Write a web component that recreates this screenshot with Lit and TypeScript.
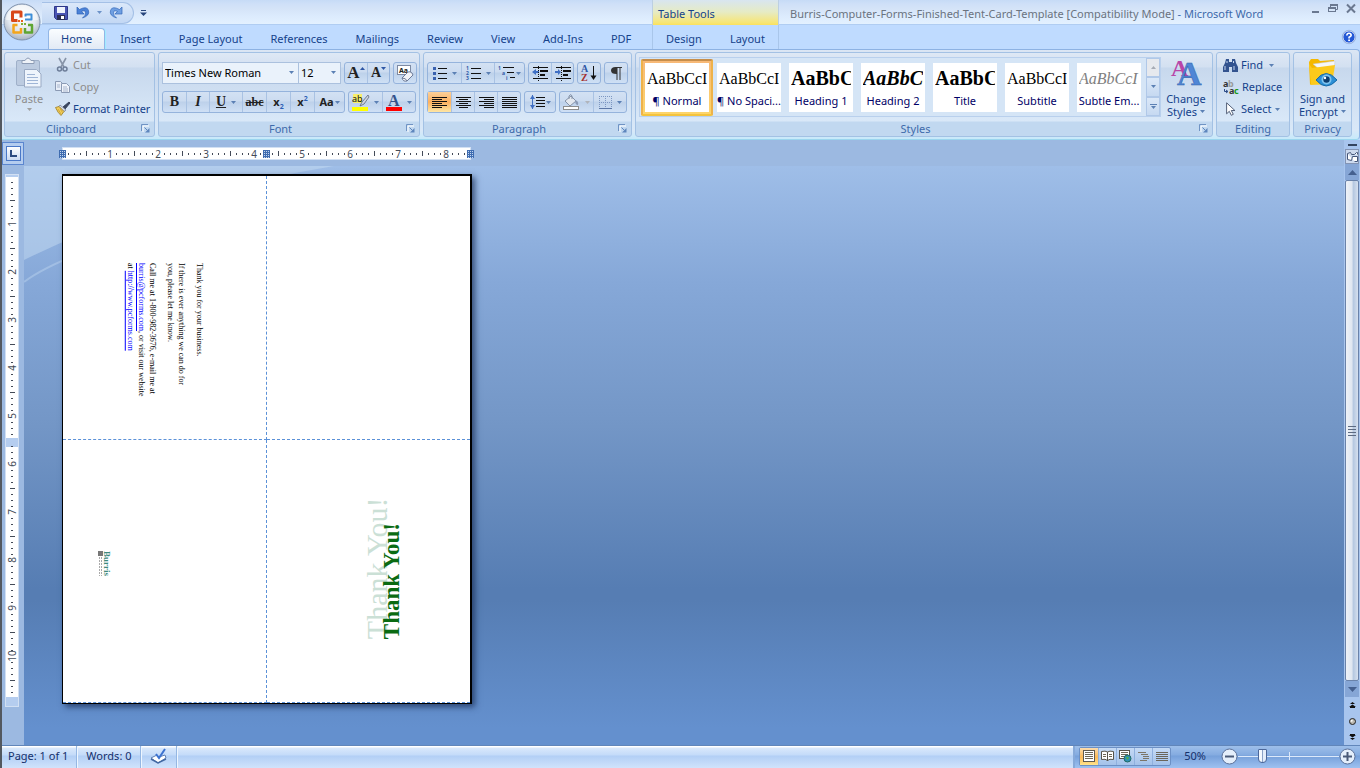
import { LitElement, html, svg, css } from "lit";
import { customElement, state } from "lit/decorators.js";
import { classMap } from "lit/directives/class-map.js";

const icon = (w: number, h: number, body: unknown) =>
  html`<svg width=${w} height=${h} viewBox="0 0 ${w} ${h}" aria-hidden="true">${body}</svg>`;

const line = (x1: number, y: number, x2: number, c = "#111", h = 1) =>
  svg`<rect x=${x1} y=${y} width=${x2 - x1} height=${h} fill=${c} />`;

const caret = (c = "#5b80b4") => icon(5, 3, svg`<path d="M0 0h5L2.5 3z" fill=${c} />`);
const caretUp = (c = "#5b80b4") => icon(5, 3, svg`<path d="M0 3h5L2.5 0z" fill=${c} />`);

const launcher = (name: string) => html`<button class="launch" aria-label="${name} options">${icon(
  9, 9,
  svg`<path d="M.5 7V.5H7" fill="none" stroke="#6f93c4"/><path d="M2 8V2h6" fill="none" stroke="#fff"/><path d="M3.500 3.500l3 3" stroke="#5e86bd"/><path d="M8.500 4v4.500H4z" fill="#5e86bd"/>`
)}</button>`;

const I = {
  office: icon(38, 38, svg`
    <defs><radialGradient id="orb" cx=".5" cy=".35" r=".65"><stop offset="0" stop-color="#fff"/><stop offset=".6" stop-color="#e3e8ef"/><stop offset="1" stop-color="#a9b3c1"/></radialGradient></defs>
    <circle cx="19" cy="19" r="18" fill="url(#orb)" stroke="#7d90ac"/>
    <path d="M3 17a16 15 0 0 1 32 0z" fill="#fff" opacity=".5"/>
    <g fill="none" stroke-linejoin="round">
      <path d="M18 14.500v-5.500h-8.500v8.500h5" stroke="#d8471a" stroke-width="3"/>
      <path d="M22 16.500h6.500v-5h-6v2" stroke="#3f8fd8" stroke-width="2"/>
      <path d="M14.500 22h-4v7.500h7.500v-4.500" stroke="#f3a51c" stroke-width="2.500"/>
      <path d="M22 25v4.500h7v-7.500h-4" stroke="#5fa532" stroke-width="2.500"/>
    </g>
    <g fill="#e8641c"><rect x="15" y="17" width="2" height="2"/><rect x="18" y="17" width="2" height="2"/></g>
    <g fill="#7fb13a"><rect x="18" y="20" width="2" height="2"/><rect x="21" y="20" width="2" height="2"/></g>`),
  save: icon(14, 14, svg`<path d="M.5.5h13v13h-11l-2-2z" fill="#4a55b4" stroke="#2d3788"/><rect x="3" y="1" width="8" height="6" fill="#eef3fc"/><rect x="3" y="9" width="8" height="5" fill="#2b2f55"/><rect x="7" y="10" width="3" height="3" fill="#fff"/>`),
  undo: icon(13, 13, svg`<path d="M1 1v7h7L5.500 5.500q3.500-2 4 1T6.500 12Q14 9.500 12.500 4.500T3.500 3.500z" fill="#4b82d8" stroke="#2f62b5" stroke-width=".7"/>`),
  redo: icon(13, 13, svg`<path d="M12 1v7H5l2.500-2.500q-3.500-2-4 1T6.500 12Q-1 9.500 .5 4.500T9.500 3.500z" fill="#6f9fe2" stroke="#3467b8" stroke-width=".7"/>`),
  custom: icon(7, 6, svg`<path d="M1 0h5v1H1zM0 2.500h7L3.500 6z" fill="#27457c"/>`),
  min: icon(9, 12, svg`<rect x="1" y="7" width="7" height="2" fill="#6a7890"/>`),
  restore: icon(10, 10, svg`<path d="M2.500 3V1.500h7v4H8" fill="none" stroke="#6a7890"/><path d="M2 1h8M0 4h8" stroke="#6a7890" stroke-width="2"/><rect x=".5" y="3.500" width="7" height="4" fill="none" stroke="#6a7890"/>`),
  close: icon(10, 9, svg`<path d="M1 .5l8 8M9 .5l-8 8" stroke="#6a7890" stroke-width="2"/>`),
  help: icon(14, 14, svg`<circle cx="7" cy="7" r="6.200" fill="#2459d6" stroke="#fff" stroke-width="1"/><circle cx="7" cy="7" r="6.700" fill="none" stroke="#6e8fc6" stroke-width=".6"/><path d="M4.800 5.500Q5 3.300 7 3.300T9.200 5.300Q9.200 6.300 7.100 7.300V8.500" stroke="#fff" stroke-width="1.600" fill="none"/><rect x="6.200" y="9.500" width="1.800" height="1.600" fill="#fff"/>`),
  paste: icon(28, 32, svg`<rect x="1.500" y="3.500" width="23" height="25" rx="1.500" fill="#bccbe0" stroke="#9fb0c9"/><path d="M7 3.500h3q3-5 6 0h3v3H7z" fill="#eef2f8" stroke="#8d9cb5"/><path d="M9.500 12.500h12l4.500 4.500v13h-16.500z" fill="#eef4fc" stroke="#9aaac4"/><path d="M12 17.500h8M12 20.500h11M12 23.500h11M12 26.500h11" stroke="#9fb5d6"/>`),
  cut: icon(13, 14, svg`<path d="M3 0l5 9M10 0L5 9" stroke="#8794a8" stroke-width="1.600"/><circle cx="3.500" cy="11" r="2" fill="none" stroke="#6d7d98" stroke-width="1.500"/><circle cx="9" cy="11" r="2" fill="none" stroke="#6d7d98" stroke-width="1.500"/>`),
  copy: icon(15, 12, svg`<path d="M.5.5h5l3 3v6h-8z" fill="#e8eef8" stroke="#8b9ab4"/><path d="M6.500 2.500h5l3 3v6h-8z" fill="#f0f4fb" stroke="#8b9ab4"/><path d="M2 4h3M2 6h3M8 6h4M8 8h5M8 10h5" stroke="#a7b5cd"/>`),
  painter: icon(15, 14, svg`<path d="M14 0l1 1-5 6-2-2z" fill="#39455e" stroke="#39455e"/><path d="M5 3l6 5-2 1.500L4 4.500z" fill="#d8dde8" stroke="#6d7890" stroke-width=".7"/><path d="M.5 5.500L4 4.500 9 9.500l-3 4Q3 11 .5 5.500z" fill="#f4cf5b" stroke="#9a7b20" stroke-width=".8"/><path d="M3 7l3 5M5 6.500l2.500 4" stroke="#b8902a" stroke-width=".6"/>`),
  eraser: icon(17, 17, svg`<rect x=".5" y=".5" width="13" height="9" fill="#fff" stroke="#7d8aa3"/><text x="2" y="8" class="glyph8">Aa</text><path d="M5 13l6-6q2-1 4 1l1 2-6 6q-4 1-5-3z" fill="#f1f3f8" stroke="#6d7b98"/><path d="M5 13q4 0 5 3" fill="none" stroke="#6d7b98"/>`),
  bullets: icon(14, 14, svg`${[1, 6, 11].map((y) => svg`<rect x="0" y=${y} width="3" height="3" fill="#3a62b0"/>${line(5, y + 1, 14)}`)}`),
  numbers: icon(15, 14, svg`${[1, 6, 11].map((y, i) => svg`<text x="0" y=${y + 3} class="num">${i + 1}</text>${line(5, y + 1, 15)}`)}`),
  multi: icon(17, 15, svg`<text x="0" y="4" class="num">1</text>${line(5, 1, 16)}<text x="4" y="9" class="num">a</text>${line(9, 6, 16)}<text x="8" y="14" class="num">i</text>${line(12, 11, 17)}`),
  outdent: icon(16, 15, svg`${line(1, 1, 16)}${line(8, 4, 16, "#111", 2)}${line(8, 8, 13, "#111", 2)}${line(1, 12, 16)}<path d="M0 6l4-3v2h3v2H4v2z" fill="#3f6fc4"/><path d="M6.500 0v15" stroke="#111" stroke-dasharray="1 1"/>`),
  indent: icon(16, 15, svg`${line(1, 1, 16)}${line(8, 4, 16, "#111", 2)}${line(8, 8, 13, "#111", 2)}${line(1, 12, 16)}<path d="M6 6L3 3v2H0v2h3v2z" fill="#3f6fc4"/><path d="M6.500 0v15" stroke="#111" stroke-dasharray="1 1"/>`),
  sort: icon(16, 16, svg`<text x="0" y="7" class="sortA">A</text><text x="0" y="16" class="sortZ">Z</text><path d="M12.500 1v12" stroke="#111"/><path d="M9.500 10.500h6L12.500 15z" fill="#111"/>`),
  pilcrow: icon(11, 13, svg`<path d="M4.500 0H11v1H9.500v12h-1V1h-2v12h-1V7Q0 7 0 3.500T4.500 0z" fill="#333"/>`),
  al: icon(15, 13, svg`${[0, 2, 4, 6, 8, 10].map((y, i) => line(0, y + 1, i % 2 ? 10 : 15))}`),
  ac: icon(15, 13, svg`${[0, 2, 4, 6, 8, 10].map((y, i) => (i % 2 ? line(3, y + 1, 12) : line(0, y + 1, 15)))}`),
  ar: icon(15, 13, svg`${[0, 2, 4, 6, 8, 10].map((y, i) => line(i % 2 ? 5 : 0, y + 1, 15))}`),
  aj: icon(15, 13, svg`${[0, 2, 4, 6, 8, 10].map((y) => line(0, y + 1, 15))}`),
  spacing: icon(15, 16, svg`<path d="M2.500 1v14" stroke="#3f6fc4"/><path d="M0 5l2.500-4L5 5zM0 11l2.500 4L5 11z" fill="#3f6fc4"/>${[3, 6, 9, 12].map((y) => line(6, y, 15))}`),
  bucket: icon(17, 16, svg`<path d="M2 7l6-5 5 5-6 5z" fill="#e3e8ef" stroke="#8492a8"/><path d="M6 5V2q2-3 3 0v3" fill="none" stroke="#8492a8"/><path d="M12 6q4 1 3 5-3 0-3-5" fill="#8b9ab5"/><rect x=".5" y="12.500" width="15" height="3" fill="#fff" stroke="#8d8d8d"/>`),
  border: icon(13, 13, svg`<path d="M.5 0v12M6.500 0v12M12.500 0v12M0 .5h13M0 6.500h13" stroke="#7d97c2" stroke-dasharray="1 1"/><path d="M0 12.500h13" stroke="#5c77a6"/>`),
  highlight: icon(17, 17, svg`<rect x="1" y="0" width="9" height="9" fill="#f6ee6c"/><text x="0" y="8" class="glyph9">ab</text><path d="M16 1l-6 7-2 4 4-2 5-7z" fill="#cfd6e2" stroke="#5a6579" stroke-width=".8"/><rect x="0" y="13" width="16" height="4" fill="#ff0"/>`),
  fontColor: icon(16, 17, svg`<text x="2" y="12" class="colorA">A</text><rect x="0" y="13" width="16" height="4" fill="#f00"/>`),
  change: icon(30, 30, svg`<text x="0" y="18" class="bigA pink">A</text><text x="6" y="27" class="bigA blue">A</text>`),
  find: icon(15, 13, svg`<path d="M3 0h3v3h3V0h3l1 4 2 4v5H9V8H6v5H0V8l2-4z" fill="#33538f"/><path d="M2 7v4M11 7v4M4 2v2M10.500 2v2" stroke="#c8d8f0"/>`),
  replace: icon(16, 15, svg`<text x="0" y="7" class="rep">a</text><text x="5" y="7" class="rep faint">b</text><path d="M1.500 9v2.500h3M3 10l2 1.500L3 13" fill="none" stroke="#2b4a86"/><text x="6" y="14" class="rep">a</text><text x="11" y="14" class="rep green">c</text>`),
  select: icon(10, 14, svg`<path d="M.6.8v11l2.700-2.500 2 4 2-1-2-3.800h3.600z" fill="#fff" stroke="#44506a" stroke-width=".9"/>`),
  privacy: icon(30, 30, svg`<path d="M1 4l2-3h7l2 2 14-1v5L2 27z" fill="#f5b800"/><path d="M5 6l22-3-2 20z" fill="#f5f6f8" stroke="#c5c9cf" stroke-width=".5"/><path d="M1 6l3 4 23-3-3 19L3 27z" fill="#fcca1c"/><path d="M8 22q10-13 21 0-11 12-21 0z" fill="#2c8fd6" stroke="#176aa8"/><circle cx="18.500" cy="21.500" r="5" fill="#7fc4ef"/><circle cx="18.500" cy="21.500" r="3.200" fill="#0c3d70"/><circle cx="17" cy="20" r="1.200" fill="#fff"/>`),
  proof: icon(17, 16, svg`<path d="M1 10l6-3 2 2 6-2 1 3-8 5z" fill="#fff" stroke="#5d7fb5"/><path d="M1 11l7 4 8-4" fill="none" stroke="#4368a3" stroke-width="1.500"/><path d="M6 6l3 4 6-9" fill="none" stroke="#3c72d0" stroke-width="2"/>`),
  vPrint: icon(12, 12, svg`<rect x=".5" y=".5" width="11" height="11" fill="#fff" stroke="#5f5a50"/>${[2, 4, 6, 8].map((y) => line(2, y, 10, "#6e6758"))}`),
  vRead: icon(13, 12, svg`<path d="M.5 1.500q4-1 6 .5 2-1.500 6-.5v8q-4-1-6 1-2-2-6-1zM6.500 2v9" fill="#fff" stroke="#57534a"/><path d="M2 4.500h3M2 6.500h3M8 4.500h3M8 6.500h3" stroke="#6e6758"/>`),
  vWeb: icon(13, 13, svg`<rect x=".5" y=".5" width="10" height="8" fill="#fff" stroke="#57534a"/><path d="M2 2.500h7M2 4.500h7M2 6.500h4" stroke="#6e6758"/><circle cx="8.500" cy="8.500" r="3.500" fill="#2f8fb5" stroke="#1f6a63"/><path d="M7 7q2-1 3 1l-2 2z" fill="#52b04a"/>`),
  vOutline: icon(12, 11, svg`${line(0, 1, 8, "#7b7568")}${line(3, 3, 10, "#7b7568")}${line(5, 5, 11, "#7b7568")}${line(5, 7, 11, "#7b7568")}${line(2, 9, 9, "#7b7568")}`),
  vDraft: icon(12, 11, svg`${[1, 3, 5, 7, 9].map((y) => line(0, y, 12, "#6b665a"))}`),
  minus: icon(17, 17, svg`<circle cx="8.500" cy="8.500" r="7.500" fill="#e4eefb" stroke="#5c7199"/><rect x="4" y="7.500" width="9" height="2" fill="#4a5a78"/>`),
  plus: icon(17, 17, svg`<circle cx="8.500" cy="8.500" r="7.500" fill="#e4eefb" stroke="#5c7199"/><path d="M4 8.500h9M8.500 4v9" stroke="#4a5a78" stroke-width="2"/>`),
  rulerToggle: icon(13, 13, svg`<path d="M1.500 3.500v6l4 1 1-4h5v5h-3M1.500 3.500l3-1 1 2h3l2-2h1v2" fill="#fff" stroke="#45567a"/>`),
  prev: icon(7, 6, svg`<path d="M3.500 0L6 2H1zM3.500 2.500L7 5H0zM1 5h5v1H1z" fill="#111"/>`),
  next: icon(7, 6, svg`<path d="M1 0h5v1H1zM0 1h7L3.500 3.500zM1 4h5L3.500 6z" fill="#111"/>`),
  ball: icon(7, 7, svg`<circle cx="3.500" cy="3.500" r="3" fill="#bcb9b0" stroke="#222"/><circle cx="2.700" cy="2.700" r="1" fill="#fff"/>`),
};

const dotGrid = (x: number) => svg`<g stroke="#3f6cb0" stroke-width="1"><rect x=${x} y="5" width="7" height="8" fill="#c3d6ef" stroke="none"/>${[0, 2, 4, 6].map(
  (i) => svg`<path d="M${x + i + 0.5} 5v8M${x} ${i + 5.5}h7" />`
)}</g>`;

const STYLES = [
  ["AaBbCcI", "¶ Normal", "s-body"],
  ["AaBbCcI", "¶ No Spaci...", "s-body"],
  ["AaBbC", "Heading 1", "s-head"],
  ["AaBbCc", "Heading 2", "s-head s-ital"],
  ["AaBbC", "Title", "s-head"],
  ["AaBbCcI", "Subtitle", "s-body"],
  ["AaBbCcI", "Subtle Em...", "s-body s-ital s-grey"],
];

const TABS = ["Home", "Insert", "Page Layout", "References", "Mailings", "Review", "View", "Add-Ins", "PDF"];

@customElement("app-root")
class AppRoot extends LitElement {
  @state() private tab = "Home";
  @state() private style = 0;

  static styles = css`
    :host {
      display: flex;
      flex-direction: column;
      height: 100vh;
      min-width: 1100px;
      box-sizing: border-box;
      border-left: 2px solid #53585f;
      background: #bfdbff;
      color: #15428b;
      font: 11px/14px "Noto Sans", "Open Sans", sans-serif;
      overflow: hidden;
    }
    * { box-sizing: border-box; }
    svg { display: block; flex: none; overflow: visible; }
    button, select, input { font: inherit; color: inherit; margin: 0; }
    button {
      display: flex; align-items: center; justify-content: center;
      padding: 0; border: 0; background: none; white-space: nowrap;
    }
    h1, h2, p { margin: 0; font: inherit; }

    /* title bar and tabs */
    .top {
      position: relative;
      display: grid;
      grid-template: 25px 24px / 650px 127px 1fr;
      flex: none;
      background: linear-gradient(#c6dbf6 0, #cfe0f8 4px, #d5e4f8 9px, #dcebfd 16px, #e3f1ff 24px, #b0cdf2 24px, #b0cdf2 25px, #bfdbff 25px);
    }
    .orb { position: absolute; left: 1px; top: 3px; z-index: 2; }
    .qat { display: flex; align-items: center; padding-left: 40px; }
    .pill {
      display: flex; align-items: center; gap: 8px; width: 92px; height: 22px; padding-left: 12px;
      border: 1px solid #a4c0e6; border-left: 0; border-radius: 0 11px 11px 0;
      background: linear-gradient(#dbe8fa, #c3d8f4);
    }
    .qat .more { margin-left: 6px; }
    .context {
      padding: 7px 5px 0; background: linear-gradient(#d8e5f0 0, #e6ebc4 12px, #f6e67a 22px, #fbe15c);
      border: solid #bccfe2; border-width: 0 1px;
    }
    .caption { display: flex; justify-content: space-between; }
    .caption h1 { padding: 7px 0 0 11px; color: #6a737f; white-space: nowrap; }
    .caption h1 span { color: #3e6aaa; }
    .win { display: flex; gap: 8px; align-items: flex-start; padding: 4px 4px 0 0; }
    .tabs { display: flex; gap: 2px; padding: 3px 0 0 46px; }
    .tabs.ctx { padding-left: 0; border: solid #a9c6ea; border-width: 0 1px; }
    .tab { height: 21px; padding: 0 12px; border: 1px solid transparent; border-bottom: 0; }
    .tab.on {
      border-color: #92b6e6; border-radius: 4px 4px 0 0;
      background: linear-gradient(#fafdff, #e2eaf5); box-shadow: 1px 0 0 #a2ecff;
    }
    .help { display: flex; justify-content: flex-end; align-items: center; padding-right: 4px; }

    /* ribbon */
    .ribbon {
      display: flex; gap: 3px; flex: none; padding: 2px 7px 2px 2px; height: 91px;
      border: 1px solid #8db2e3; border-left: 0; border-bottom-color: #9bd6ee; border-radius: 0 4px 4px 0;
      background: linear-gradient(#dbe6f4, #c9d9ee 20px, #d9e8f8 80px, #c7e9fa);
    }
    .group {
      display: flex; flex-direction: column; border: 1px solid #a3c1e4; border-radius: 3px;
      background: linear-gradient(#dee8f5 0, #d3e0f1 14px, #c7d8ed 15px, #d9e8f8 68px, #c1d8f0 69px);
    }
    .group > footer { display: flex; align-items: center; height: 15px; color: #3e6aaa; }
    .group > footer span { flex: 1; text-align: center; }
    .body { flex: 1; display: flex; padding: 0 3px; }
    .launch { width: 17px; }
    .clip { width: 151px; }
    .fontg { width: 262px; }
    .para { width: 209px; }
    .stylesg { flex: 1; min-width: 200px; }
    .stylesg .body { padding-right: 1px; }
    .edit { width: 74px; }
    .priv { width: 59px; }
    .priv .body { justify-content: center; padding: 0; }
    .big { flex-direction: column; justify-content: flex-start; line-height: 13px; padding-top: 5px; }
    .big > svg:first-child { margin-bottom: 4px; }
    .big .lbl2 { display: flex; align-items: center; gap: 3px; }
    .off { color: #8d8d8d; }
    .big.paste { width: 42px; gap: 3px; padding-top: 4px; }
    .big.paste > svg:first-child { margin-bottom: 0; }
    .list { display: flex; flex-direction: column; padding-top: 1px; }
    .list button { height: 22px; justify-content: flex-start; gap: 3px; }
    .list .ic { width: 15px; display: flex; justify-content: center; }
    .clip .list { padding-left: 5px; }
    .edit .list { padding-left: 6px; }
    .rows { display: flex; flex-direction: column; gap: 7px; padding-top: 9px; }
    .row { display: flex; gap: 3px; }
    .bar {
      display: flex; flex: none; height: 22px; border: 1px solid #95b3dc; border-radius: 3px;
      background: linear-gradient(#d3e1f3 0, #cbdbf0 9px, #bdd1ea 10px, #cfe0f5);
    }
    .bar button { width: 23px; gap: 3px; border-left: 1px solid #a9c2e3; }
    .bar button:first-child { border-left: 0; }
    .bar.slim button { width: 22px; gap: 0; }
    .bar button.n { width: 24px; }
    .bar button.w { width: 33px; gap: 5px; }
    .bar button.m { width: 30px; gap: 1px; }
    .bar button.on { background: linear-gradient(#fbd09a, #fdb05e 10px, #fee6a4); }
    .bar.slim .ser svg { align-self: flex-start; margin-top: 4px; }
    .combo { position: relative; display: flex; flex: none; }
    .combo select {
      appearance: none; height: 22px; padding: 0 2px; border: 1px solid #abc1de; border-radius: 0;
      background: #eaf2fb; color: #000; width: 100%;
    }
    .combo svg { position: absolute; right: 5px; top: 9px; pointer-events: none; }
    .name { width: 137px; }
    .size { width: 43px; margin-left: -4px; }
    .ser { font: bold 14px/20px "Liberation Serif", serif; color: #222; }
    .ser.i { font-style: italic; }
    .ser.u { text-decoration: underline; }
    .ser.s { font-size: 12px; text-decoration: line-through; }
    .ser.a1 { font-size: 17px; }
    .san { font: bold 11px/20px "Noto Sans", sans-serif; color: #222; }
    .san sub, .san sup { font-size: 7px; line-height: 0; color: #2d5fb5; }
    .num { font: bold 5px "Noto Sans", sans-serif; fill: #3058a8; }
    .glyph8 { font: bold 7px "Noto Sans", sans-serif; fill: #222; }
    .glyph9 { font: 9px "Noto Sans", sans-serif; fill: #111; }
    .sortA { font: bold 10px "Liberation Serif", serif; fill: #2f57a5; }
    .sortZ { font: bold 10px "Liberation Serif", serif; fill: #a5302f; }
    .colorA { font: bold 16px "Liberation Serif", serif; fill: #34548d; }
    .bigA { font: bold 26px "Liberation Serif", serif; }
    .pink { font-size: 24px; fill: #b845a8; }
    .blue { font-size: 34px; fill: #4f86d6; stroke: #2f5ea8; stroke-width: 0.5px; }
    .rep { font: bold 9px "Noto Sans", sans-serif; fill: #333; }
    .faint { fill: #999; }
    .green { fill: #1a9a1a; }

    /* style gallery */
    .gallery {
      flex: 1; display: flex; margin-top: 4px; height: 60px; min-width: 0;
      border: 1px solid #b9d0ed; background: #d5e5f6;
    }
    .tiles { flex: 1; display: flex; overflow: hidden; padding: 1px 0 0 1px; }
    .tile {
      flex: none; flex-direction: column; width: 72px; height: 57px; padding: 2px; color: #000; border: 2px solid transparent;
    }
    .tile > span { display: flex; flex-direction: column; width: 64px; height: 49px; background: #fff; overflow: hidden; }
    .tile.on { border-color: #c68e4b #eeb24a #f4c33c; background: linear-gradient(#f7b977, #fdd56b); border-radius: 2px; }
    .tile b { height: 31px; margin: 0 2px; overflow: hidden; line-height: 31px; text-align: left; }
    .tile i { font-style: normal; color: #000066; line-height: 14px; }
    .tile .s-body { font: 16px/31px "Liberation Serif", serif; }
    .tile .s-head { font: bold 20px/31px "Liberation Serif", serif; }
    .tile .s-ital { font-style: italic; }
    .tile .s-grey { color: #808080; }
    .scr { display: flex; flex-direction: column; width: 14px; }
    .scr button { flex: 1; flex-direction: column; gap: 1px; border: 1px solid #b0c8e8; background: linear-gradient(#dbe8f8, #c6d9f1); }
    .scr button:first-child { background: #e6e9ee; }
    .change { width: 50px; }

    /* workspace */
    .work { flex: 1; display: grid; grid-template: 26px 1fr / 22px 1fr 16px; min-height: 0; background: #9cb9e1; }
    .corner { border: 1px solid #5b86cf; margin: 2px 0 1px; background: #b5cdef; }
    .corner span {
      width: 15px; height: 15px; border: 1px solid #4a78c8; background: linear-gradient(#fff, #c9d9f2);
      display: flex; align-items: center; justify-content: center;
    }
    .hr { padding: 5px 0 0 34px; }
    .tick { font: 10px "Noto Sans", sans-serif; fill: #444b58; text-anchor: middle; }
    .vr { padding: 8px 0 0 3px; overflow: hidden; }
    .doc {
      position: relative; padding: 8px 0 0 38px; overflow: hidden;
      background: linear-gradient(#9fbee8, #86a8d8 20%, #7396c6 45%, #567db3 73%, #567db3 75%, #6490ce 97%);
    }
    .swoosh { position: absolute; left: 0; top: 0; }
    .page {
      position: relative; display: grid; grid-template: 264px 263px / 204px 203px; width: 410px;
      border: solid #000; border-width: 2px 2px 1px 1px; background: #fff; color: #000;
      box-shadow: 3px 3px 6px rgba(20, 40, 80, 0.7);
    }
    .cell { border-bottom: 1px dashed #5b91d8; display: flex; }
    .cell:nth-child(odd) { border-right: 1px dashed #5b91d8; }
    .note {
      writing-mode: vertical-rl; font: 8px/11px "Liberation Serif", serif; margin: 87px 0 0 62px; height: 150px;
      white-space: nowrap;
    }
    .note p { margin-left: 7px; }
    .note p:last-child { margin-left: 0; }
    .note a { color: #00f; }
    .art { display: grid; margin: 57px 0 0 93px; align-content: start; }
    .art span { grid-area: 1 / 1; writing-mode: vertical-rl; transform: rotate(180deg); white-space: nowrap; }
    .art .back { font: 30px/34px "Liberation Serif", serif; color: #cbe0d6; }
    .art .front { font: bold 23px/30px "Liberation Serif", serif; color: #0a6b12; margin: 26px 0 0 17px; align-self: start; }
    .logo { display: flex; flex-direction: column; writing-mode: vertical-rl; margin: 111px 0 0 34px; height: 28px; align-self: flex-start; }
    .logo span { font: bold 9px/8px "Liberation Serif", serif; color: #3d8a7c; }

    .side { grid-row: 1 / 3; grid-column: 3; display: flex; flex-direction: column; align-items: center; background: #a8c5ee; padding-top: 4px; }
    .side > button { width: 14px; flex: none; }
    .split { height: 2px; width: 9px; background: #34445f; }
    .side .toggle { height: 15px; margin-top: 3px; border: 1px solid #8394b4; background: #ccd9ee; }
    .side .arrow { height: 16px; background: #86a6d6; }
    .side .thumb {
      flex: 1; border: 1px solid #6a82a9; border-radius: 2px; flex-direction: column; gap: 2px;
      background: linear-gradient(90deg, #eef2f8, #dfe6f0 50%, #b4c7e0 60%, #d6e0ee);
    }
    .thumb span { width: 8px; height: 1px; background: #5d6b82; }
    .side .nav { height: 16px; }

    /* status bar */
    .status {
      display: flex; flex: none; height: 23px; border-top: 1px solid #6186ba; white-space: nowrap; color: #15306b;
      background: linear-gradient(#fff 0, #fff 1px, #d9e8fb 2px, #c4dbf9 9px, #b2cff5 10px, #d0e3fb);
    }
    .status > span, .status > button { display: flex; align-items: center; padding: 0 8px 2px 6px; border-right: 1px solid #95b7e3; box-shadow: 1px 0 0 #eef6ff; }
    .status > span + span, .status > button { padding: 0 9px 2px; }
    .zoom {
      display: flex; align-items: center; margin-left: auto; padding: 0 4px 2px 4px;
      border-left: 2px solid #86a9d9; background: linear-gradient(#9ebfea, #84abe0 9px, #76a0da 10px, #9ec1f0);
    }
    .views { display: flex; height: 19px; border: 1px solid #6c90c5; border-radius: 2px; background: linear-gradient(#c5daf5, #a4c2ea); }
    .views button { width: 18px; border-left: 1px solid #8fb0de; }
    .views button:first-child { border: 0; background: linear-gradient(#fcdcae, #fcb957 9px, #ffe38c); }
    .zoom output { width: 37px; text-align: right; padding-right: 2px; }
    .zoom .out { margin-left: 13px; }
    .zoom input {
      appearance: none; width: 101px; height: 16px; background:
        linear-gradient(#dce9fb, #dce9fb) 51px 50% / 1px 8px no-repeat,
        linear-gradient(#dce9fb, #dce9fb) 0 50% / 100% 1px no-repeat;
    }
    .zoom input::-webkit-slider-thumb {
      appearance: none; width: 9px; height: 14px; border: 1px solid #4c679a; border-radius: 1px 1px 4px 4px;
      background: linear-gradient(90deg, #f3f8ff 3px, #8aa2c8 3px, #8aa2c8 4px, #e3edfb 4px);
    }
  `;

  private hRuler() {
    const ticks = [];
    for (let i = 1; i < 68; i++) {
      const x = i * 6 + 4;
      if (i % 8 === 0) ticks.push(svg`<text class="tick" x=${x} y="13">${i / 8}</text>`);
      else if (i !== 34) ticks.push(svg`<rect x=${x} y=${i % 4 ? 8 : 6} width="1" height=${i % 4 ? 2 : 5} fill="#444b58"/>`);
    }
    return html`<svg width="416" height="18" viewBox="0 0 416 18" role="img" aria-label="Horizontal ruler">
      <rect x="4.500" y="2.500" width="408" height="12" fill="#fff" stroke="#d2e0f3"/>${ticks}${dotGrid(1)}${dotGrid(205)}${dotGrid(409)}
    </svg>`;
  }

  private vRuler() {
    const ticks = [];
    for (let i = 1; i < 87; i++) {
      const y = i * 6 + 2;
      if (i === 44) continue;
      if (i % 8 === 0) ticks.push(svg`<text class="tick" transform="translate(11 ${y}) rotate(-90)">${i / 8}</text>`);
      else ticks.push(svg`<rect y=${y} x=${i % 4 ? 6 : 5} height="1" width=${i % 4 ? 2 : 5} fill="#444b58"/>`);
    }
    return html`<svg width="15" height="534" viewBox="0 0 15 534" role="img" aria-label="Vertical ruler">
      <rect x=".5" y=".5" width="13" height="532" fill="#fff" stroke="#d2e0f3"/>
      <rect x="1" y="1" width="12" height="2" fill="#b5cdef"/>
      <rect x="1" y="264" width="12" height="9" fill="#b5cdef"/>
      <rect x="1" y="523" width="12" height="9" fill="#b5cdef"/>${ticks}
    </svg>`;
  }

  private tabButton(t: string) {
    return html`<button role="tab" class=${classMap({ tab: true, on: this.tab === t })} @click=${() => (this.tab = t)}>${t}</button>`;
  }

  render() {
    return html`
      <header class="top">
        <button class="orb" aria-label="Office">${I.office}</button>
        <div class="qat">
          <div class="pill">
            <button aria-label="Save">${I.save}</button><button aria-label="Undo">${I.undo}</button>${caret("#6c92c8")}<button aria-label="Redo">${I.redo}</button>
          </div>
          <button class="more" aria-label="Customize">${I.custom}</button>
        </div>
        <div class="context">Table Tools</div>
        <div class="caption">
          <h1>Burris-Computer-Forms-Finished-Tent-Card-Template [Compatibility Mode] <span>- Microsoft Word</span></h1>
          <div class="win"><button aria-label="Minimize">${I.min}</button><button aria-label="Restore">${I.restore}</button><button aria-label="Close">${I.close}</button></div>
        </div>
        <nav class="tabs" role="tablist">${TABS.map((t) => this.tabButton(t))}</nav>
        <nav class="tabs ctx" role="tablist">${["Design", "Layout"].map((t) => this.tabButton(t))}</nav>
        <div class="help"><button aria-label="Help">${I.help}</button></div>
      </header>

      <section class="ribbon">
        <div class="group clip">
          <div class="body">
            <button class="big paste off">${I.paste}<span>Paste</span>${caret("#a0a0a0")}</button>
            <div class="list">
              <button class="off"><span class="ic">${I.cut}</span>Cut</button>
              <button class="off"><span class="ic">${I.copy}</span>Copy</button>
              <button><span class="ic">${I.painter}</span>Format Painter</button>
            </div>
          </div>
          <footer><span>Clipboard</span>${launcher("Clipboard")}</footer>
        </div>

        <div class="group fontg">
          <div class="body rows">
            <div class="row">
              <label class="combo name"><select aria-label="Font"><option>Times New Roman</option></select>${caret()}</label>
              <label class="combo size"><select aria-label="Font size"><option>12</option></select>${caret()}</label>
              <div class="bar slim"><button class="ser a1" aria-label="Grow font">A${caretUp("#2f57a5")}</button><button class="ser" aria-label="Shrink font">A${caret("#2f57a5")}</button></div>
              <div class="bar slim"><button aria-label="Clear formatting">${I.eraser}</button></div>
            </div>
            <div class="row">
              <div class="bar">
                <button class="ser">B</button><button class="ser i">I</button><button class="w ser"><span class="ser u">U</span>${caret()}</button>
                <button class="n ser s">abc</button><button class="n san"><span>x<sub>2</sub></span></button><button class="n san"><span>x<sup>2</sup></span></button><button class="m san">Aa${caret()}</button>
              </div>
              <div class="bar"><button class="w" aria-label="Highlight">${I.highlight}${caret()}</button><button class="w" aria-label="Font color">${I.fontColor}${caret()}</button></div>
            </div>
          </div>
          <footer><span>Font</span>${launcher("Font")}</footer>
        </div>

        <div class="group para">
          <div class="body rows">
            <div class="row">
              <div class="bar"><button class="w" aria-label="Bullets">${I.bullets}${caret()}</button><button class="w" aria-label="Numbering">${I.numbers}${caret()}</button><button class="m" aria-label="Multilevel list">${I.multi}${caret()}</button></div>
              <div class="bar slim"><button aria-label="Decrease indent">${I.outdent}</button><button aria-label="Increase indent">${I.indent}</button></div>
              <div class="bar slim"><button aria-label="Sort">${I.sort}</button></div>
              <div class="bar slim"><button aria-label="Show marks">${I.pilcrow}</button></div>
            </div>
            <div class="row">
              <div class="bar"><button class="on" aria-label="Left">${I.al}</button><button aria-label="Center">${I.ac}</button><button aria-label="Right">${I.ar}</button><button aria-label="Justify">${I.aj}</button></div>
              <div class="bar"><button class="m" aria-label="Line spacing">${I.spacing}${caret()}</button></div>
              <div class="bar"><button class="w" aria-label="Shading">${I.bucket}${caret("#b0b4bb")}</button><button class="w" aria-label="Borders">${I.border}${caret()}</button></div>
            </div>
          </div>
          <footer><span>Paragraph</span>${launcher("Paragraph")}</footer>
        </div>

        <div class="group stylesg">
          <div class="body">
            <div class="gallery">
              <div class="tiles">
                ${STYLES.map(([sample, name, cls], i) => html`<button class=${classMap({ tile: true, on: this.style === i })} @click=${() => (this.style = i)}><span><b class=${cls}>${sample}</b><i>${name}</i></span></button>`)}
              </div>
              <div class="scr">
                <button aria-label="Up">${caretUp("#a6abb5")}</button>
                <button aria-label="Down">${caret()}</button>
                <button aria-label="More">${icon(7, 1, svg`<rect width="7" height="1" fill="#5b80b4"/>`)}${caret()}</button>
              </div>
            </div>
            <button class="big change">${I.change}<span>Change</span><span class="lbl2">Styles ${caret()}</span></button>
          </div>
          <footer><span>Styles</span>${launcher("Styles")}</footer>
        </div>

        <div class="group edit">
          <div class="body list">
            <button>${I.find}Find&nbsp;${caret()}</button>
            <button>${I.replace}Replace</button>
            <button><span class="ic">${I.select}</span>Select ${caret()}</button>
          </div>
          <footer><span>Editing</span></footer>
        </div>

        <div class="group priv">
          <div class="body"><button class="big">${I.privacy}<span>Sign and</span><span class="lbl2">Encrypt ${caret()}</span></button></div>
          <footer><span>Privacy</span></footer>
        </div>
      </section>

      <main class="work">
        <button class="corner" aria-label="Tab selector"><span>${icon(7, 7, svg`<path d="M1 0v6h6" fill="none" stroke="#2b4a80" stroke-width="2"/>`)}</span></button>
        <div class="hr">${this.hRuler()}</div>
        <div class="vr">${this.vRuler()}</div>
        <div class="doc">
          <svg class="swoosh" width="340" height="120" viewBox="0 0 340 120" aria-hidden="true">
            <path d="M0 0H310Q130 30 0 94z" fill="#c6dcf2" opacity=".5"/>
            <path d="M0 116Q20 101 60 86" fill="none" stroke="#c6dcf2" opacity=".4" stroke-width="2"/>
          </svg>
          <article class="page">
            <div class="cell">
              <div class="note">
                <p>Thank you for your business.</p>
                <p>If there is ever anything we can do for<br />you, please let me know.</p>
                <p>Call me at 1-800-982-3676, e-mail me at<br /><a href="#">burris@pcforms.com</a>, or visit our website<br />at <a href="#">http://www.pcforms.com</a></p>
              </div>
            </div>
            <div class="cell"></div>
            <div class="cell">
              <div class="logo"><span>Burris</span>${icon(6, 26, svg`<rect x="1" y="0" width="5" height="5" fill="#777"/><path d="M2.500 6v19M4.500 6v19" stroke="#aaa" stroke-dasharray="2 1"/>`)}</div>
            </div>
            <div class="cell">
              <div class="art"><span class="back" aria-hidden="true">Thank You!</span><span class="front">Thank You!</span></div>
            </div>
          </article>
        </div>
        <div class="side">
          <span class="split"></span>
          <button class="toggle" aria-label="View ruler">${I.rulerToggle}</button>
          <button class="arrow" aria-label="Scroll up">${icon(9, 5, svg`<path d="M0 5h9L4.500 0z" fill="#45608f"/>`)}</button>
          <button class="thumb" aria-label="Scroll"><span></span><span></span><span></span><span></span></button>
          <button class="arrow" aria-label="Scroll down">${icon(9, 5, svg`<path d="M0 0h9L4.500 5z" fill="#45608f"/>`)}</button>
          <button class="nav" aria-label="Previous page">${I.prev}</button>
          <button class="nav" aria-label="Browse">${I.ball}</button>
          <button class="nav" aria-label="Next page">${I.next}</button>
        </div>
      </main>

      <footer class="status">
        <span>Page: 1 of 1</span><span>Words: 0</span><button aria-label="Proofing">${I.proof}</button>
        <div class="zoom">
          <div class="views">
            <button aria-label="Print layout">${I.vPrint}</button><button aria-label="Full screen reading">${I.vRead}</button><button aria-label="Web layout">${I.vWeb}</button><button aria-label="Outline">${I.vOutline}</button><button aria-label="Draft">${I.vDraft}</button>
          </div>
          <output>50%</output>
          <button class="out" aria-label="Zoom out">${I.minus}</button>
          <input type="range" min="0" max="100" .value=${"22"} aria-label="Zoom" />
          <button aria-label="Zoom in">${I.plus}</button>
        </div>
      </footer>
    `;
  }
}
